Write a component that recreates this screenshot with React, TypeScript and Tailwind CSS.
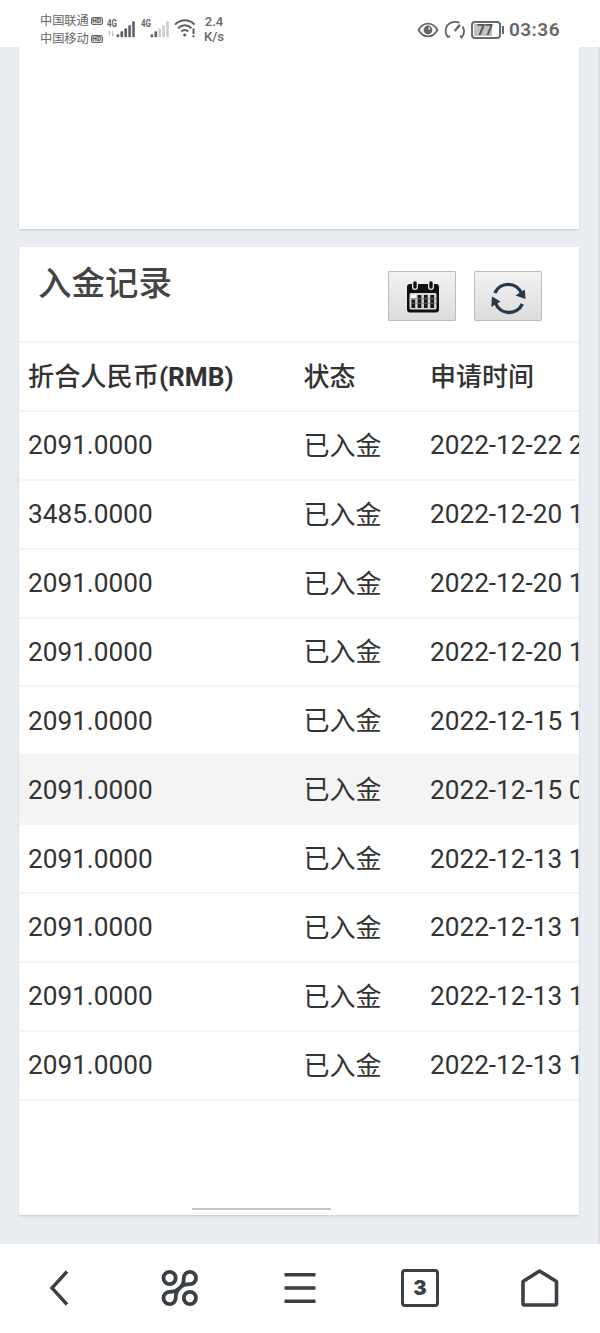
const deposits = [
  { amount: "2091.0000", status: "已入金", time: "2022-12-22 21:14:08" },
  { amount: "3485.0000", status: "已入金", time: "2022-12-20 17:32:45" },
  { amount: "2091.0000", status: "已入金", time: "2022-12-20 15:20:11" },
  { amount: "2091.0000", status: "已入金", time: "2022-12-20 10:48:27" },
  { amount: "2091.0000", status: "已入金", time: "2022-12-15 14:05:52" },
  { amount: "2091.0000", status: "已入金", time: "2022-12-15 09:41:30", active: true },
  { amount: "2091.0000", status: "已入金", time: "2022-12-13 19:26:03" },
  { amount: "2091.0000", status: "已入金", time: "2022-12-13 16:12:39" },
  { amount: "2091.0000", status: "已入金", time: "2022-12-13 13:57:16" },
  { amount: "2091.0000", status: "已入金", time: "2022-12-13 11:03:44" },
];

function Carrier({ name }: { name: string }) {
  return (
    <div className="flex h-[18px] items-center gap-[2px]">
      <span className="text-[12.200px] leading-[18px]">{name}</span>
      <span className="flex h-2 w-3 shrink-0 items-center justify-center rounded-[2px] border border-[#666] bg-[#ddd] text-[6.500px] leading-none font-bold text-[#555]">
        HD
      </span>
    </div>
  );
}

function Signal({ level, arrows }: { level: number; arrows?: boolean }) {
  const bars = [3, 6, 9, 12, 16];
  return (
    <svg width="29" height="22" viewBox="0 0 29 22">
      <text x="0" y="9" fontSize="10" fontWeight="700" fill="#666" textLength="10" lengthAdjust="spacingAndGlyphs">
        4G
      </text>
      {arrows && <path d="M2.5 18v-5l-1.5 2M5.500 13v5l1.500-2" fill="none" stroke="#c4c4c4" strokeWidth="1" />}
      {bars.map((h, i) => (
        <rect key={h} x={9.6 + i * 3.9} y={19.3 - h} width="2.6" height={h} rx="0.7" fill={i < level ? "#606060" : "#ccc"} />
      ))}
    </svg>
  );
}

function StatusBar() {
  return (
    <header className="flex h-[47px] shrink-0 justify-between bg-white pr-10 pl-10 text-[#666]">
      <div className="flex">
        <div className="w-[67px] pt-3">
          <Carrier name="中国联通" />
          <Carrier name="中国移动" />
        </div>
        <div className="flex gap-[5px] pt-[18px]">
          <Signal level={5} arrows />
          <Signal level={2} />
        </div>
        <svg width="22" height="22" viewBox="0 0 22 22" className="mt-[18px] ml-[4px]" fill="none" stroke="#606060" strokeWidth="2">
          <path d="M1 6.600C7 0.800 15 0.800 20.500 6.600" />
          <path d="M4 10.200C8 6.400 13.500 6.400 17.500 10.200" />
          <path d="M7.300 13.500C9.500 11.500 12 11.500 14.200 13.500" />
          <circle cx="10.700" cy="17" r="1.600" fill="#606060" stroke="none" />
          <path d="M19.500 10.500v5.500M19.500 17.300v2" />
        </svg>
        <div className="ml-[4px] w-7 pt-[14px] text-center text-[13px] leading-[15px] font-medium">
          2.4
          <br />
          K/s
        </div>
      </div>
      <div className="flex items-center pt-3">
        <svg width="22" height="18" viewBox="0 0 22 18" fill="none" stroke="#666" strokeWidth="1.800">
          <path d="M1.500 9C6.500 0.500 15.500 0.500 20.500 9C15.500 17.500 6.500 17.500 1.500 9Z" />
          <circle cx="11" cy="9" r="4.400" fill="#666" stroke="none" />
          <path d="M11.500 7.500h1.500" stroke="#fff" />
        </svg>
        <svg width="22" height="20" viewBox="0 0 22 20" className="ml-[5px]" fill="none" stroke="#666" strokeWidth="1.800">
          <path d="M4.200 17.500L6 15.600M4.200 17.500C-0.500 12 1.500 2 11 1.800C13 1.800 14.500 2.300 15.500 2.800M18.500 6.500C20.700 10 20 14.500 17.600 17.500L16 15.600" />
          <path d="M16 4.800L10.800 11" strokeWidth="2.400" />
        </svg>
        <div className="ml-[5px] flex h-[18px] w-[30px] items-center justify-center rounded-[4px] border-2 border-[#6b6b6b] p-[1px]">
          <span className="flex h-full w-full items-center bg-linear-to-r from-[#c2c2c2] from-75% to-white to-75% pl-[3px] text-[14px] leading-none font-bold text-[#555]">
            77
          </span>
        </div>
        <span className="ml-[1px] h-2 w-[2px] bg-[#666]" />
        <span className="ml-[5px] text-[19px] leading-none font-semibold tracking-[0.500px]">03:36</span>
      </div>
    </header>
  );
}

function CalendarIcon() {
  return (
    <svg width="34" height="34" viewBox="0 0 34 34" className="mt-[2px] ml-[2px]">
      <rect x="1" y="4" width="32" height="28.500" rx="3" fill="#111" />
      <rect x="3.500" y="13" width="27" height="16.500" rx="1.500" fill="#d8d8d8" />
      <path d="M9 0v7M25 0v7" stroke="#e9e9e9" strokeWidth="6" strokeLinecap="round" />
      <path d="M9 3v4M25 3v4" stroke="#111" strokeWidth="3.400" strokeLinecap="round" />
      <path d="M5 14.500h5v3.500h-5z" fill="#fff" />
      <g stroke="#1a1a1a" strokeWidth="3.800">
        <path d="M13.500 15v13M19.800 15v13M26.200 15v13M7.300 19.500v8.500" />
      </g>
      <path d="M5 18.700h25M5 23.200h25" stroke="#777" strokeWidth="0.800" />
    </svg>
  );
}

function RefreshIcon() {
  return (
    <svg width="36" height="36" viewBox="0 0 36 36" className="mt-[3px]" fill="none" stroke="#26394b" strokeWidth="3.400">
      <path d="M4.800 13A14.500 14.500 0 0 1 31.500 13.500" />
      <path d="M32.300 24A14.500 14.500 0 0 1 5.500 23" />
      <path d="M25.500 15.500L34.800 9.500L35.500 19Z" fill="#26394b" stroke="none" />
      <path d="M2 16.500L10.500 21.500L1.300 27Z" fill="#26394b" stroke="none" />
    </svg>
  );
}

function ToolButton({ children }: { children: React.ReactNode }) {
  return (
    <button className="flex h-[50px] w-[68px] items-center justify-center rounded-[1px] border border-[#bcbcbc] bg-linear-to-b from-[#f3f3f3] to-[#dcdcdc]">
      {children}
    </button>
  );
}

function BottomBar() {
  return (
    <nav className="grid h-[89px] shrink-0 grid-cols-5 items-center justify-items-center bg-white pb-[2px] text-[#3b4046]">
      <svg width="40" height="40" viewBox="0 0 40 40" fill="none" stroke="currentColor" strokeWidth="3.400">
        <path d="M27 3.500L12 20L27 36.500" />
      </svg>
      <svg width="40" height="40" viewBox="0 0 40 40" fill="none" stroke="currentColor" strokeWidth="3.800">
        <circle cx="9.600" cy="10" r="6.100" />
        <circle cx="29.900" cy="30" r="6.100" />
        <path d="M29.900 16.100A6.100 6.100 0 1 0 23.800 10C23.800 18 20.500 19 19.700 20C18.500 21 16.500 23.900 9.600 23.900A6.100 6.100 0 1 0 15.700 30C15.700 23 18.500 21.500 19.700 20C21 18.500 23 16.100 29.900 16.100" />
      </svg>
      <svg width="40" height="40" viewBox="0 0 40 40" stroke="currentColor" strokeWidth="3.400">
        <path d="M4.500 6.800h31M4.500 20h31M4.500 33.200h31" />
      </svg>
      <span className="flex h-[38px] w-[38px] items-center justify-center rounded-[4px] border-[3.500px] border-current font-[Inter] text-[20px] leading-none font-black">
        3
      </span>
      <svg width="40" height="40" viewBox="0 0 40 40" fill="none" stroke="currentColor" strokeWidth="3.600" strokeLinejoin="round">
        <path d="M3 13.500L19.500 3L36.500 13.500V35.500Q36.500 37 35 37H4.500Q3 37 3 35.500Z" />
      </svg>
    </nav>
  );
}

export default function App() {
  return (
    <div className="flex h-[1333px] w-[600px] flex-col overflow-hidden bg-white font-[Roboto,'Noto_Sans_CJK_SC',sans-serif]">
      <StatusBar />

      <main className="flex h-[1197px] shrink-0 flex-col gap-[18px] border-r-2 border-[#dcdee3] bg-[#eaeef3] pr-[19px] pl-[19px]">
        {/* Bottom of the previous panel */}
        <section className="h-[182px] shrink-0 bg-white shadow-[0_1px_2px_rgba(0,0,0,0.16)]" />

        <section className="flex h-[968px] shrink-0 flex-col overflow-hidden bg-white shadow-[0_1px_2px_rgba(0,0,0,0.16)]">
          <div className="flex h-[94px] shrink-0 justify-between pr-[37px] pl-[19px]">
            <h2 className="pt-[17px] text-[33.500px] leading-[40px] font-medium text-[#444]">入金记录</h2>
            <div className="flex gap-[18px] pt-6">
              <ToolButton>
                <CalendarIcon />
              </ToolButton>
              <ToolButton>
                <RefreshIcon />
              </ToolButton>
            </div>
          </div>

          <table className="w-[860px] table-fixed border-collapse text-left text-[26.200px] leading-[36px] whitespace-nowrap text-[#333]">
            <colgroup>
              <col className="w-[276px]" />
              <col className="w-[126px]" />
              <col />
            </colgroup>
            <thead>
              <tr className="h-[68.880px] border-y-2 border-[#f5f5f5]">
                <th className="pt-px pl-[9px] font-medium">
                  <span className="text-[26.200px]">折合人民币</span>
                  <span className="font-bold">(RMB)</span>
                </th>
                <th className="pt-px pl-[8.500px] text-[26px] font-medium">状态</th>
                <th className="pt-px pl-[9px] text-[26px] font-medium">申请时间</th>
              </tr>
            </thead>
            <tbody>
              {deposits.map((row) => (
                <tr key={row.time} className={`h-[68.880px] border-b-2 border-[#f5f5f5] ${row.active ? "bg-[#f4f4f4]" : ""}`}>
                  <td className="pl-[9px]">{row.amount}</td>
                  <td className="pt-px pl-[8.500px] text-[26px]">{row.status}</td>
                  <td className="pl-[9px]">{row.time}</td>
                </tr>
              ))}
            </tbody>
          </table>

          {/* Horizontal scroll thumb */}
          <div className="mt-auto mb-[5px] ml-[173px] h-[2px] w-[139px] shrink-0 bg-[#c6c6c6]" />
        </section>
      </main>

      <BottomBar />
    </div>
  );
}
